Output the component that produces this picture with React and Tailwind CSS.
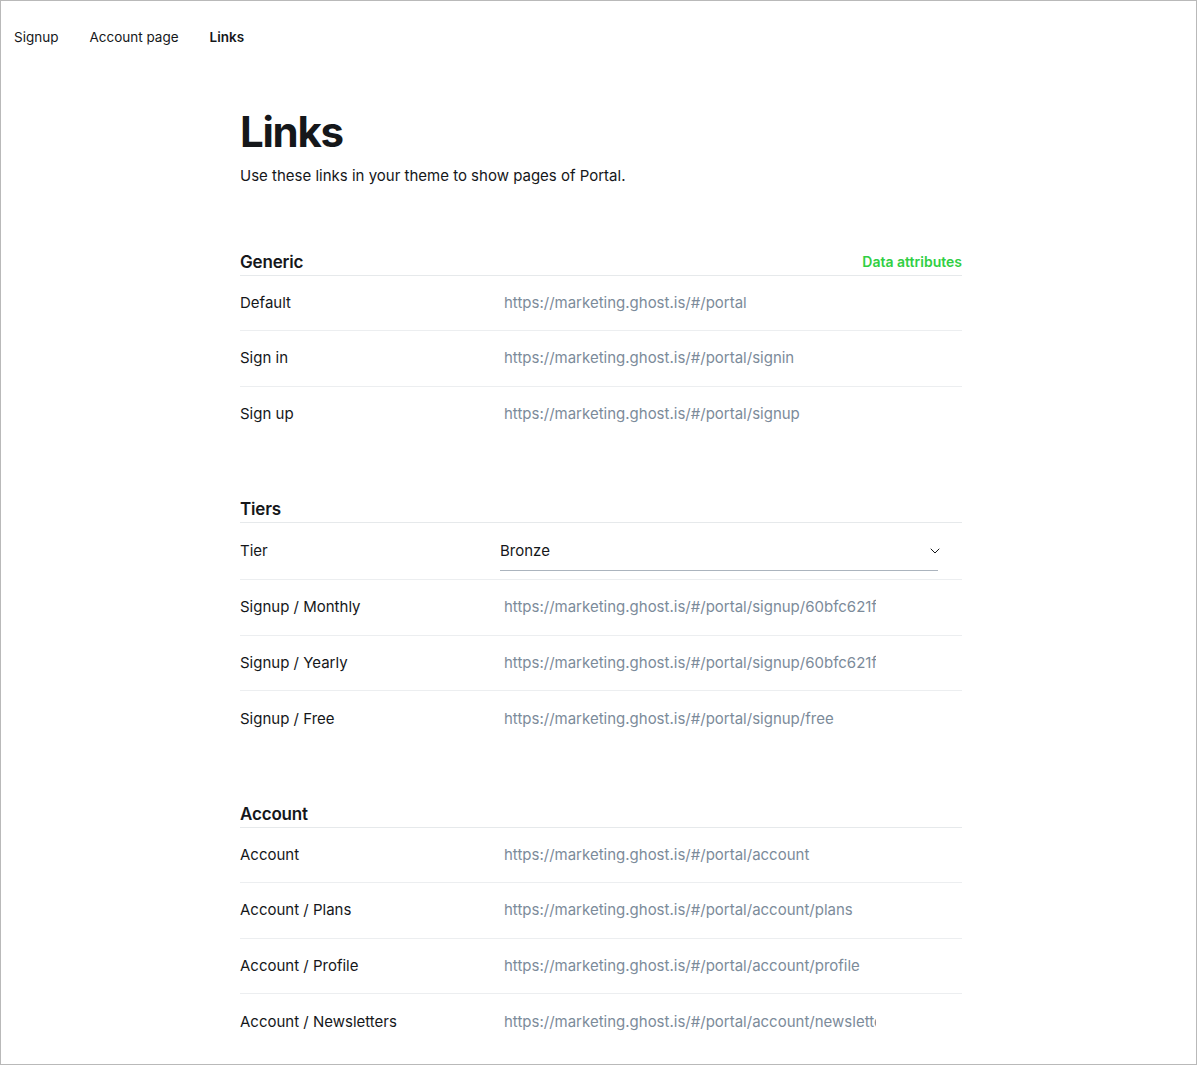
import { ChevronDown } from "lucide-react";

const sections = [
  {
    title: "Generic",
    action: "Data attributes",
    rows: [
      ["Default", "https://marketing.ghost.is/#/portal"],
      ["Sign in", "https://marketing.ghost.is/#/portal/signin"],
      ["Sign up", "https://marketing.ghost.is/#/portal/signup"],
    ],
  },
  {
    title: "Tiers",
    select: "Bronze",
    rows: [
      ["Signup / Monthly", "https://marketing.ghost.is/#/portal/signup/60bfc621f7a3c8003e2b5a41/monthly"],
      ["Signup / Yearly", "https://marketing.ghost.is/#/portal/signup/60bfc621f7a3c8003e2b5a41/yearly"],
      ["Signup / Free", "https://marketing.ghost.is/#/portal/signup/free"],
    ],
  },
  {
    title: "Account",
    rows: [
      ["Account", "https://marketing.ghost.is/#/portal/account"],
      ["Account / Plans", "https://marketing.ghost.is/#/portal/account/plans"],
      ["Account / Profile", "https://marketing.ghost.is/#/portal/account/profile"],
      ["Account / Newsletters", "https://marketing.ghost.is/#/portal/account/newsletters"],
    ],
  },
];

function Row({ label, children, last, tall }) {
  return (
    <div
      className={
        "flex items-center " +
        (tall ? "h-[57px] " : "h-[55.5px] ") +
        (last ? "" : "border-b border-[#eceef0]")
      }
    >
      <div className="w-[260px] shrink-0 text-[15px] text-[#15171a]">{label}</div>
      {children}
    </div>
  );
}

function Section({ section }) {
  return (
    <section className="mt-[55px]">
      <div className="flex items-center justify-between border-b border-[#e6e9eb] pb-[1px]">
        <h2 className="text-[17px] leading-[24px] font-semibold text-[#15171a] tracking-[-0.01em]">{section.title}</h2>
        {section.action && (
          <button className="text-[14px] leading-[24px] font-semibold text-[#30cf43]">{section.action}</button>
        )}
      </div>
      {section.select && (
        <Row label="Tier" tall>
          <div className="flex items-center justify-between w-[438px] h-[40px] border-b border-[#abb4be]">
            <span className="text-[15px] text-[#15171a]">{section.select}</span>
            <ChevronDown size={16} strokeWidth={1.5} className="text-[#15171a] -mr-[5px]" />
          </div>
        </Row>
      )}
      {section.rows.map(([label, url], i) => (
        <Row key={label} label={label} last={i === section.rows.length - 1}>
          <div className="w-[376px] pl-1 overflow-hidden whitespace-nowrap text-[15px] text-[#7c8b9a]">{url}</div>
        </Row>
      ))}
    </section>
  );
}

export default function App() {
  return (
    <div className="w-[1197px] h-[1065px] border border-[#b9b9b9] bg-white overflow-hidden font-['Inter',sans-serif] antialiased">
      <nav className="flex items-center gap-[31px] pl-[13px] pt-[26px] text-[13.5px] text-[#15171a]">
        <span>Signup</span>
        <span>Account page</span>
        <span className="font-semibold">Links</span>
      </nav>
      <main className="flex flex-col ml-[239px] w-[722px] pt-[59px]">
        <h1 className="text-[42px] leading-[52px] font-bold tracking-[-0.03em] text-[#15171a]">Links</h1>
        <p className="mt-[7px] mb-[7px] text-[15px] text-[#15171a]">Use these links in your theme to show pages of Portal.</p>
        {sections.map((s) => (
          <Section key={s.title} section={s} />
        ))}
      </main>
    </div>
  );
}
